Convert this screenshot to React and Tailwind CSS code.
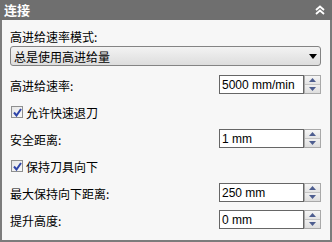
import React from 'react';

const cjk = { fontFamily: '"Noto Sans CJK SC", "Noto Sans", sans-serif' };
const num = { fontFamily: '"Liberation Sans", Arial, sans-serif' };

function Spinner() {
    return (
        <div className="flex flex-col w-[17px] h-full border border-[#a9a9a9] bg-[#eeeeee]">
            <div className="flex-1 flex items-center justify-center border-b border-[#c4c4c4] bg-gradient-to-b from-[#f6f6f6] to-[#e4e4e4]">
                <svg width="7" height="4" viewBox="0 0 7 4">
                    <path d="M0 4 L3.5 0 L7 4 Z" fill="#4d5d8f" />
                </svg>
            </div>
            <div className="flex-1 flex items-center justify-center bg-gradient-to-b from-[#f0f0f0] to-[#dedede]">
                <svg width="7" height="4" viewBox="0 0 7 4">
                    <path d="M0 0 L3.5 4 L7 0 Z" fill="#4d5d8f" />
                </svg>
            </div>
        </div>
    );
}

function NumberRow({ label, value, className = '' }) {
    return (
        <div className={`flex items-center h-[19px] ${className}`}>
            <span className="flex-1 text-[12px] text-black pt-[3px]" style={cjk}>{label}</span>
            <div className="flex h-full">
                <div className="w-[85px] h-full border border-[#666666] bg-white flex items-center pl-[2px] overflow-hidden">
                    <span className="text-[12px] text-black leading-none whitespace-nowrap" style={num}>{value}</span>
                </div>
                <Spinner />
            </div>
        </div>
    );
}

function CheckRow({ label, className = '' }) {
    return (
        <div className={`flex items-center h-[18px] ${className}`}>
            <div className="ml-[1px] w-[12px] h-[12px] border border-[#8e8f8f] bg-gradient-to-br from-[#e6e6e6] to-[#fafafa] flex items-center justify-center">
                <svg width="9" height="9" viewBox="0 0 9 9">
                    <path d="M1 4.5 L3.5 7.5 L8 1" stroke="#2f45a8" strokeWidth="2" fill="none" />
                </svg>
            </div>
            <span className="ml-[3px] text-[12px] text-black pt-[1px]" style={cjk}>{label}</span>
        </div>
    );
}

export default function App() {
    return (
        <div className="w-[332px] h-[242px] flex flex-col bg-[#f7f7f7]">
            <div className="h-[20px] bg-[#6f6f6f] flex items-center justify-between pl-[4px] pr-[7px]">
                <span className="text-white text-[13px] font-bold" style={cjk}>连接</span>
                <svg width="10" height="10" viewBox="0 0 10 10">
                    <path d="M1 5 L5 1.5 L9 5 M1 9 L5 5.5 L9 9" stroke="white" strokeWidth="1.8" fill="none" />
                </svg>
            </div>
            <div className="flex-1 flex flex-col border-x-2 border-b-2 border-[#7c7c7c] pl-[8px] pr-[9px] pt-[7px]">
                <div className="h-[19px] flex items-center">
                    <span className="text-[12px] text-black pt-[1px]" style={cjk}>高进给速率模式:</span>
                </div>
                <div className="h-[20px] rounded-[3px] border border-[#848484] bg-gradient-to-b from-[#f3f3f3] to-[#dddddd] flex items-center justify-between pl-[3px] pr-[3px]">
                    <span className="text-[12px] text-black pt-[1px]" style={cjk}>总是使用高进给量</span>
                    <svg width="8" height="5" viewBox="0 0 8 5">
                        <path d="M0 0 L8 0 L4 5 Z" fill="black" />
                    </svg>
                </div>
                <NumberRow label="高进给速率:" value="5000 mm/min" className="mt-[9px]" />
                <CheckRow label="允许快速退刀" className="mt-[9px]" />
                <NumberRow label="安全距离:" value="1 mm" className="mt-[8px]" />
                <CheckRow label="保持刀具向下" className="mt-[9px]" />
                <NumberRow label="最大保持向下距离:" value="250 mm" className="mt-[8px]" />
                <NumberRow label="提升高度:" value="0 mm" className="mt-[8px]" />
            </div>
        </div>
    );
}
